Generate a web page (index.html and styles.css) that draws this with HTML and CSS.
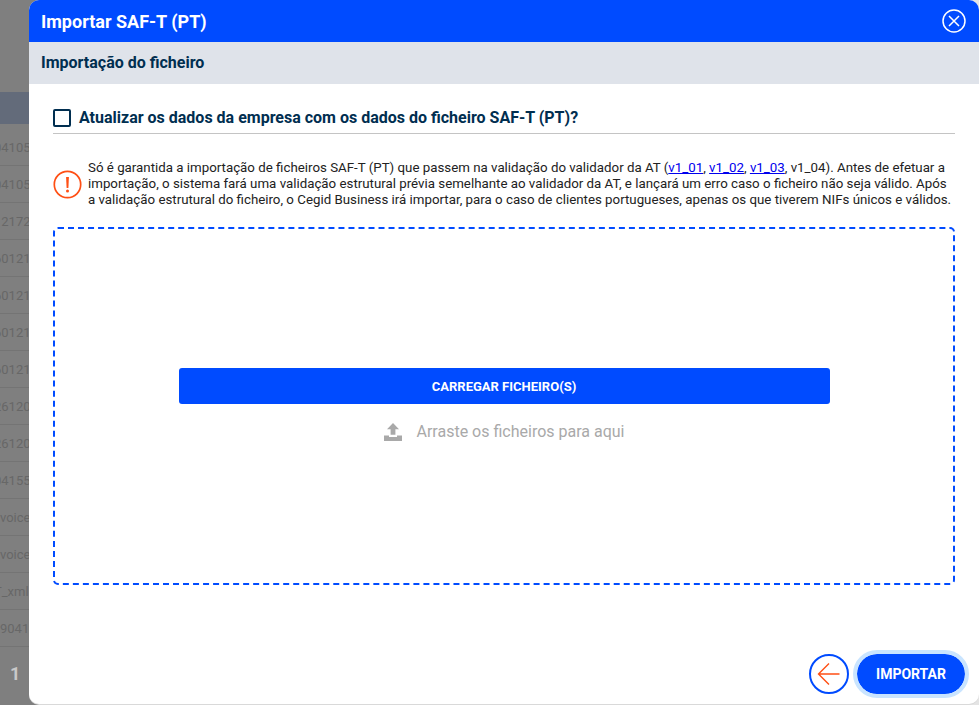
FILE: index.html
```html
<!DOCTYPE html>
<html lang="pt">

<head>
  <meta charset="UTF-8" />
  <title>Importar SAF-T (PT)</title>
  <link rel="stylesheet" href="styles.css">
</head>

<body>
  <div class="backdrop">
    <div class="list-head"></div>
    <div class="list-row">04105</div>
    <div class="list-row">04105</div>
    <div class="list-row">12172</div>
    <div class="list-row">60121</div>
    <div class="list-row">60121</div>
    <div class="list-row">60121</div>
    <div class="list-row">60121</div>
    <div class="list-row">26120</div>
    <div class="list-row">26120</div>
    <div class="list-row">04155</div>
    <div class="list-row flush">voice</div>
    <div class="list-row flush">voice</div>
    <div class="list-row">T_xml</div>
    <div class="list-row flush">90412</div>
    <div class="pager">1</div>
  </div>

  <div class="modal">
    <header class="modal-title">
      <h1>Importar SAF-T (PT)</h1>
      <svg class="close-icon" width="24" height="24" viewBox="0 0 24 24" fill="none" stroke="#fff">
        <circle cx="12" cy="12" r="11" stroke-width="1.5" />
        <path d="M7 7l10 10M17 7L7 17" stroke-width="1.5" />
      </svg>
    </header>
    <div class="modal-subtitle">Importação do ficheiro</div>

    <div class="modal-body">
      <label class="check-row">
        <span class="checkbox"></span>
        <span>Atualizar os dados da empresa com os dados do ficheiro SAF-T (PT)?</span>
      </label>

      <div class="notice">
        <svg class="notice-icon" width="29" height="29" viewBox="0 0 29 29" fill="none">
          <circle cx="14.5" cy="14.5" r="13.2" stroke="#ff4f14" stroke-width="1.7" />
          <path d="M13.100 7h2.800l-.5 11h-1.800z" fill="#ff4f14" />
          <circle cx="14.5" cy="21" r="1.500" fill="#ff4f14" />
        </svg>
        <p>Só é garantida a importação de ficheiros SAF-T (PT) que passem na validação do validador da AT (<a href="#">v1_01</a>, <a href="#">v1_02</a>, <a href="#">v1_03</a>, v1_04). Antes de efetuar a importação, o sistema fará uma validação estrutural prévia semelhante ao validador da AT, e lançará um erro caso o ficheiro não seja válido. Após a validação estrutural do ficheiro, o Cegid Business irá importar, para o caso de clientes portugueses, apenas os que tiverem NIFs únicos e válidos.</p>
      </div>

      <div class="dropzone">
        <button class="upload-btn" type="button">CARREGAR FICHEIRO(S)</button>
        <div class="drop-hint">
          <svg width="18" height="18" viewBox="0 0 18 18" fill="#a9a9a9">
            <path d="M9 0l6 6.200h-3.600v5.600H6.600V6.200H3z" />
            <path d="M0 12.600h5V14h8v-1.400h5V18H0z" />
          </svg>
          <span>Arraste os ficheiros para aqui</span>
        </div>
      </div>
    </div>

    <footer class="modal-actions">
      <button class="back-btn" type="button" aria-label="Voltar">
        <svg width="24" height="24" viewBox="0 0 24 24" fill="none" stroke="#ff4f14" stroke-width="1.400">
          <path d="M22.500 12H1.500M12 1.500L1.500 12 12 22.500" />
        </svg>
      </button>
      <button class="import-btn" type="button">IMPORTAR</button>
    </footer>
  </div>
</body>

</html>
```

FILE: styles.css
```css
* {
  margin: 0;
  padding: 0;
  box-sizing: border-box;
  font-family: Roboto, 'Liberation Sans', sans-serif;
}

html,
body {
  height: 100%;
  overflow: hidden;
}

body {
  background: linear-gradient(to right, #7f7f7f 50%, #e4e4e4 50%);
  position: relative;
}

.backdrop {
  height: 705px;
  padding-top: 92px;
  display: flex;
  flex-direction: column;
}

.list-head {
  height: 32px;
  margin-bottom: 5px;
  background-color: #636b7a;
}

.list-row {
  height: 37px;
  line-height: 37px;
  margin-left: -6px;
  font-size: 13px;
  color: #676767;
  border-bottom: 1px solid #747474;
  white-space: nowrap;
}

.list-row.flush {
  margin-left: 0;
}

.pager {
  margin-top: 16px;
  padding-left: 10px;
  font-size: 18px;
  font-weight: 700;
  color: #c9c9c9;
}

.modal {
  position: absolute;
  top: 0;
  left: 29px;
  right: 0;
  height: 704px;
  background-color: #fff;
  border-radius: 10px;
  box-shadow: 0 1px 0 #d9d9d9;
  overflow: hidden;
  display: flex;
  flex-direction: column;
}

.modal-title {
  height: 42px;
  flex-shrink: 0;
  background-color: #004bff;
  color: #fff;
  padding: 0 13px 0 12px;
  display: flex;
  align-items: center;
  justify-content: space-between;
}

.modal-title h1 {
  font-size: 18px;
  font-weight: 700;
}

.modal-subtitle {
  height: 42px;
  flex-shrink: 0;
  line-height: 42px;
  padding-left: 12px;
  background-color: #dfe3ea;
  color: #002e50;
  font-size: 16px;
  font-weight: 700;
}

.modal-body {
  flex: 1;
  padding: 0 24px;
}

.check-row {
  height: 50px;
  display: flex;
  align-items: center;
  gap: 8px;
  padding-top: 18px;
  border-bottom: 1px solid #c4c4c4;
  color: #002e50;
  font-size: 16px;
  font-weight: 700;
}

.checkbox {
  width: 18px;
  height: 18px;
  border: 2px solid #002e50;
  border-radius: 2px;
}

.notice {
  margin-top: 26px;
  display: flex;
  align-items: center;
  gap: 6px;
  color: #222;
}

.notice-icon {
  flex-shrink: 0;
}

.notice p {
  font-size: 13.3px;
  line-height: 16px;
}

.notice a {
  color: #0000ee;
}

.dropzone {
  height: 358px;
  margin-top: 19px;
  border: 2px dashed #004bff;
  border-radius: 5px;
  display: flex;
  flex-direction: column;
  align-items: center;
  padding-top: 139px;
}

.upload-btn {
  width: 651px;
  height: 36px;
  background-color: #004bff;
  border: none;
  border-radius: 3px;
  color: #fff;
  font-size: 13px;
  font-weight: 700;
}

.drop-hint {
  margin-top: 18px;
  display: flex;
  align-items: center;
  gap: 15px;
  color: #a9a9a9;
  font-size: 16px;
}

.modal-actions {
  height: 52px;
  flex-shrink: 0;
  padding-right: 10px;
  display: flex;
  align-items: flex-start;
  justify-content: flex-end;
  gap: 4px;
}

.back-btn {
  width: 40px;
  height: 40px;
  margin-top: 2px;
  border: 2px solid #004bff;
  border-radius: 50%;
  background-color: #fff;
  display: flex;
  align-items: center;
  justify-content: center;
}

.import-btn {
  width: 116px;
  height: 48px;
  margin-top: -2px;
  border: 4px solid #c9e4ff;
  border-radius: 24px;
  background-color: #004bff;
  background-clip: padding-box;
  color: #fff;
  font-size: 14px;
  font-weight: 700;
}
```
